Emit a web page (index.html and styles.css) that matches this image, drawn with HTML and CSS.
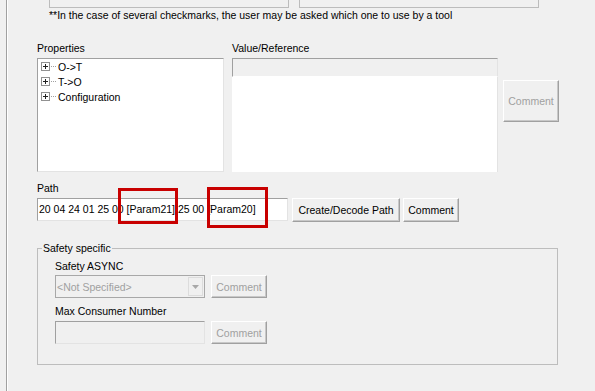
FILE: index.html
```html
<!DOCTYPE html>
<html lang="en">
	<head>
		<meta charset="UTF-8" />
		<title>Connection Path</title>
		<link rel="stylesheet" href="styles.css">
	</head>
	<body>
		<div class="frame">
			<div class="top-fields">
				<div class="top-box"></div>
				<div class="top-box"></div>
			</div>
			<div class="note">**In the case of several checkmarks, the user may be asked which one to use by a tool</div>

			<div class="props-row">
				<div class="props">
					<div class="label">Properties</div>
					<ul class="tree">
						<li><svg class="plus" width="15" height="9" viewBox="0 0 15 9"><rect x="0.5" y="0.5" width="8" height="8" fill="#fff" stroke="#919191"/><path d="M2 4.5h5M4.5 2v5" stroke="#222"/><path d="M10 4.5h5" stroke="#a0a0a0" stroke-dasharray="1 1"/></svg>O-&gt;T</li>
						<li><svg class="plus" width="15" height="9" viewBox="0 0 15 9"><rect x="0.5" y="0.5" width="8" height="8" fill="#fff" stroke="#919191"/><path d="M2 4.5h5M4.5 2v5" stroke="#222"/><path d="M10 4.5h5" stroke="#a0a0a0" stroke-dasharray="1 1"/></svg>T-&gt;O</li>
						<li><svg class="plus" width="15" height="9" viewBox="0 0 15 9"><rect x="0.5" y="0.5" width="8" height="8" fill="#fff" stroke="#919191"/><path d="M2 4.5h5M4.5 2v5" stroke="#222"/><path d="M10 4.5h5" stroke="#a0a0a0" stroke-dasharray="1 1"/></svg>Configuration</li>
					</ul>
				</div>
				<div class="value">
					<div class="label">Value/Reference</div>
					<div class="value-strip"></div>
					<div class="value-box"></div>
				</div>
				<button class="btn disabled big-comment">Comment</button>
			</div>

			<div class="path-section">
				<div class="label">Path</div>
				<div class="path-row">
					<div class="field path-field">20 04 24 01 25 00 [Param21] 25 00 [Param20]</div>
					<button class="btn decode">Create/Decode Path</button>
					<button class="btn comment">Comment</button>
					<div class="mark mark-one"></div>
					<div class="mark mark-two"></div>
				</div>
			</div>

			<fieldset class="group">
				<legend>Safety specific</legend>
				<div class="group-body">
					<div class="label sub">Safety ASYNC</div>
					<div class="line">
						<div class="combo">
							<span>&lt;Not Specified&gt;</span>
							<span class="arrow"><svg width="7" height="4" viewBox="0 0 7 4"><path d="M0 0h7L3.5 4z" fill="#a8a8a8"/></svg></span>
						</div>
						<button class="btn disabled comment">Comment</button>
					</div>
					<div class="label sub second">Max Consumer Number</div>
					<div class="line">
						<div class="field disabled-field"></div>
						<button class="btn disabled comment">Comment</button>
					</div>
				</div>
			</fieldset>
		</div>
	</body>
</html>
```

FILE: styles.css
```css
body {
	margin: 0;
	background: #f0f0f0;
	font-family: "Liberation Sans", Arial, sans-serif;
	font-size: 10.5px;
	color: #000;
	overflow: hidden;
}

.frame {
	margin-left: 6px;
	height: 391px;
	box-sizing: border-box;
	border-left: 1px solid #a0a0a0;
	box-shadow: inset 1px 0 #fff;
	padding-left: 30px;
}

.top-fields {
	display: flex;
	gap: 10px;
	margin-left: 12px;
}

.top-box {
	width: 240px;
	height: 8px;
	box-sizing: border-box;
	border: 1px solid #bcbcbc;
	border-top: none;
}

.note {
	margin-left: 12px;
	line-height: 14px;
}

.label {
	line-height: 14px;
	margin-bottom: 3px;
}

.props-row {
	display: flex;
	margin-top: 19px;
}

.props {
	width: 187px;
}

.tree {
	list-style: none;
	margin: 0;
	padding: 0 0 0 3px;
	height: 114px;
	box-sizing: border-box;
	background: #fff;
	border: 1px solid;
	border-color: #a0a0a0 #e3e3e3 #e3e3e3 #a0a0a0;
}

.tree li {
	display: flex;
	align-items: center;
	height: 15px;
}

.plus {
	margin-right: 2px;
}

.value {
	width: 266px;
	margin-left: 8px;
}

.value-strip {
	height: 19px;
	box-sizing: border-box;
	border: 1px solid;
	border-color: #a0a0a0 #e3e3e3 #fff #a0a0a0;
}

.value-box {
	height: 95px;
	background: #fff;
	border-right: 1px solid #e3e3e3;
}

.btn {
	font-family: "Liberation Sans", Arial, sans-serif;
	font-size: 10.5px;
	color: #000;
	background: #f0f0f0;
	padding: 0;
	border: 1px solid;
	border-color: #fff #a0a0a0 #a0a0a0 #fff;
	box-shadow: inset -1px -1px #c8c8c8;
}

.btn.disabled {
	color: #a0a0a0;
}

.big-comment {
	width: 56px;
	height: 42px;
	margin: 39px 0 0 5px;
}

.path-section {
	margin-top: 9px;
}

.path-row {
	position: relative;
	display: flex;
}

.field {
	box-sizing: border-box;
	height: 23px;
	border: 1px solid;
	border-color: #a0a0a0 #e3e3e3 #e3e3e3 #a0a0a0;
}

.path-field {
	width: 251px;
	background: #fff;
	padding-left: 1px;
	line-height: 21px;
	white-space: nowrap;
}

.decode {
	width: 108px;
	height: 24px;
	margin-left: 4px;
}

.comment {
	width: 56px;
	height: 24px;
	margin-left: 3px;
}

.mark {
	position: absolute;
	border: 3px solid #c80000;
	box-sizing: border-box;
}

.mark-one {
	left: 81px;
	top: -10px;
	width: 60px;
	height: 36px;
}

.mark-two {
	left: 170px;
	top: -11px;
	width: 61px;
	height: 41px;
}

.group {
	width: 521px;
	box-sizing: border-box;
	margin: 19px 0 0 0;
	padding: 0;
	border: 1px solid #bdbdbd;
	min-width: 0;
}

.group legend {
	margin-left: 4px;
	padding: 0 1px;
	line-height: 14px;
}

.group-body {
	padding: 4px 0 20px 17px;
}

.label.sub {
	margin-bottom: 2px;
}

.label.second {
	margin-top: 6px;
	margin-bottom: 3px;
}

.line {
	display: flex;
}

.line .comment {
	margin-left: 6px;
	height: 23px;
}

.combo {
	display: flex;
	align-items: center;
	justify-content: space-between;
	width: 150px;
	height: 23px;
	box-sizing: border-box;
	border: 1px solid #a8a8a8;
	color: #a0a0a0;
	padding: 0 1px 0 1px;
}

.arrow {
	display: flex;
	align-items: center;
	justify-content: center;
	width: 15px;
	height: 19px;
	box-sizing: border-box;
	border: 1px solid #dcdcdc;
}

.disabled-field {
	width: 150px;
}
```
